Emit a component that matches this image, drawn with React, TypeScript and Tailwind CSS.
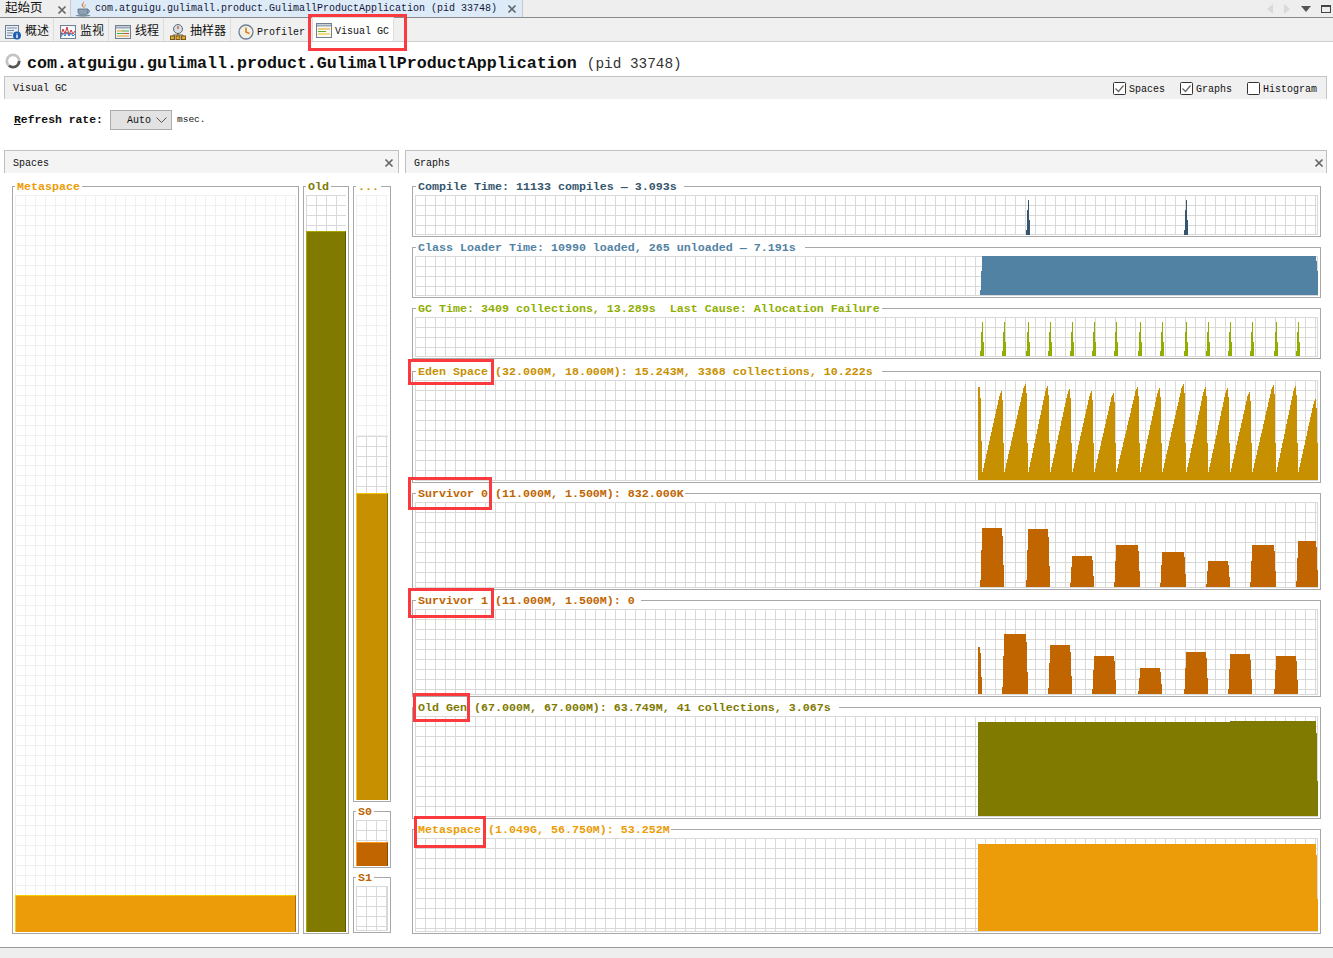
import React from "react";

type Rect = [number, number, number, number];

const lightGrid = "bg-[linear-gradient(#f0f0f0_1px,transparent_1px),linear-gradient(90deg,#f0f0f0_1px,transparent_1px)] bg-[size:10px_10px]";
const darkGrid = "bg-[linear-gradient(#d9d9d9_1px,transparent_1px),linear-gradient(90deg,#d9d9d9_1px,transparent_1px)] bg-[size:10px_10px]";

const toPath = (rects: Rect[]) =>
  rects.map(([x1, y, x2, bottom]) => `M${x1} ${y}H${x2}V${bottom}H${x1}Z`).join("");

// thin peaks of the compile and gc charts
const spike = (x: number, top: number, bottom: number): Rect[] => [
  [x, bottom - 5, x + 4, bottom],
  [x + 1, top + 20, x + 4, bottom],
  [x + 1, top + 10, x + 3, bottom],
  [x + 2, top, x + 3, bottom],
];

const edenPeaks = [
  [1001, 391], [1025, 384], [1047, 386], [1069, 389], [1091, 391],
  [1113, 393], [1137, 387], [1159, 388], [1183, 384], [1205, 387],
  [1227, 388], [1249, 392], [1273, 385], [1295, 386], [1315, 399],
];

const edenRects = () => {
  const rects: Rect[] = [
    [978, 387, 980, 480],
    [980, 398, 981, 480],
    [981, 441, 982, 480],
  ];
  let start = 982;
  edenPeaks.forEach(([peak, top]) => {
    for (let x = start; x < peak - 1; x += 1) {
      const t = (x - start) / (peak - 1 - start);
      rects.push([x, Math.round(472 - (472 - top) * t), x + 1, 480]);
    }
    rects.push([peak - 1, top + 2, peak, 480]);
    rects.push([peak, top, peak + 1, 480]);
    rects.push([peak + 1, top + 9, peak + 2, 480]);
    rects.push([peak + 2, 443, peak + 3, 480]);
    start = peak + 3;
  });
  return rects;
};

// stepped block of the survivor charts
const block = (left: number, right: number, top: number, bottom: number): Rect[] => {
  const h = bottom - top;
  return [
    [left, bottom - h * 0.12, right, bottom],
    [left + 1, bottom - h * 0.37, right, bottom],
    [left + 1, bottom - h * 0.63, right - 1, bottom],
    [left + 2, bottom - h * 0.86, right - 1, bottom],
    [left + 2, top, right - 2, bottom],
  ];
};

const charts = [
  {
    title: "Compile Time: 11133 compiles — 3.093s",
    color: "text-[#35566e]",
    fill: "#35566e",
    y: 186,
    h: 51,
    box: "h-[51px]",
    pad: "pr-[7px]",
    rects: [...spike(1026, 200, 235), ...spike(1184, 200, 235)],
  },
  {
    title: "Class Loader Time: 10990 loaded, 265 unloaded — 7.191s",
    color: "text-[#5282a3]",
    fill: "#5282a3",
    y: 247,
    h: 51,
    box: "h-[51px]",
    pad: "pr-[9px]",
    rects: [
      [980, 290, 1318, 295],
      [981, 271, 1318, 295],
      [982, 256, 1316, 295],
      [1316, 261, 1317, 295],
      [1317, 281, 1318, 295],
    ] as Rect[],
  },
  {
    title: "GC Time: 3409 collections, 13.289s  Last Cause: Allocation Failure",
    color: "text-[#8fae00]",
    fill: "#8fae00",
    y: 308,
    h: 51,
    box: "h-[51px]",
    pad: "pr-[2px]",
    rects: [980, 1002, 1026, 1048, 1070, 1092, 1114, 1138, 1160, 1184, 1206, 1228, 1250, 1274, 1296].flatMap(x =>
      spike(x, 322, 356),
    ),
  },
  {
    title: "Eden Space (32.000M, 18.000M): 15.243M, 3368 collections, 10.222s",
    color: "text-[#c79000]",
    fill: "#c79000",
    y: 371,
    h: 112,
    box: "h-[112px] mt-[2px]",
    pad: "pr-[9px]",
    rects: edenRects(),
  },
  {
    title: "Survivor 0 (11.000M, 1.500M): 832.000K",
    color: "text-[#c06500]",
    fill: "#c06500",
    y: 493,
    h: 97,
    box: "h-[97px]",
    pad: "pr-[1px]",
    rects: [
      block(980, 1004, 528, 587),
      block(1026, 1050, 529, 587),
      block(1070, 1094, 556, 587),
      block(1114, 1140, 545, 587),
      block(1160, 1186, 552, 587),
      block(1206, 1230, 561, 587),
      block(1250, 1276, 545, 587),
      block(1296, 1318, 541, 587),
    ].flat(),
  },
  {
    title: "Survivor 1 (11.000M, 1.500M): 0",
    color: "text-[#c06500]",
    fill: "#c06500",
    y: 600,
    h: 97,
    box: "h-[97px]",
    pad: "pr-[6px]",
    rects: [
      [978, 647, 980, 694],
      [980, 653, 981, 694],
      [981, 677, 982, 694],
      ...block(1002, 1028, 634, 694),
      ...block(1048, 1072, 645, 694),
      ...block(1092, 1116, 656, 694),
      ...block(1138, 1162, 668, 694),
      ...block(1184, 1208, 652, 694),
      ...block(1228, 1252, 654, 694),
      ...block(1274, 1298, 656, 694),
    ] as Rect[],
  },
  {
    title: "Old Gen (67.000M, 67.000M): 63.749M, 41 collections, 3.067s",
    color: "text-[#807a00]",
    fill: "#807a00",
    y: 707,
    h: 112,
    box: "h-[112px]",
    pad: "pr-[8px]",
    rects: [
      [978, 722, 1316, 816],
      [1230, 721, 1316, 816],
      [1316, 733, 1317, 816],
      [1317, 781, 1318, 816],
    ] as Rect[],
  },
  {
    title: "Metaspace (1.049G, 56.750M): 53.252M",
    color: "text-[#ec9c06]",
    fill: "#ec9c08",
    y: 829,
    h: 105,
    box: "h-[105px]",
    pad: "pr-[1px]",
    rects: [
      [978, 844, 1316, 931],
      [1316, 855, 1317, 931],
      [1317, 899, 1318, 931],
    ] as Rect[],
  },
];

const Chart: React.FC<(typeof charts)[number]> = ({title, color, fill, y, h, box, pad, rects}) => (
  <div className={`relative flex flex-col border border-[#a8a8a8] pt-[8px] pb-[1px] px-[2px] ${box}`}>
    <div className={`absolute left-[3px] top-[-8px] bg-white pl-[2px] h-[15px] leading-[17px] text-[11.67px] font-bold whitespace-pre ${color} ${pad}`}>
      {title}
    </div>
    <div className={`flex-1 min-h-0 border-r border-b border-[#d9d9d9] ${darkGrid}`}>
      <svg width={903} height={h - 11} viewBox={`415 ${y + 9} 903 ${h - 11}`} className="block" shapeRendering="crispEdges">
        <path d={toPath(rects as Rect[])} fill={fill} />
      </svg>
    </div>
  </div>
);

const SpaceBox: React.FC<{title: string; color: string; className: string; children: React.ReactNode}> = ({title, color, className, children}) => (
  <div className={`relative flex flex-col border border-[#a8a8a8] pt-[8px] pb-[1px] px-[2px] ${className}`}>
    <div className={`absolute left-[2px] top-[-8px] bg-white px-[2px] h-[15px] leading-[17px] text-[11.67px] font-bold whitespace-pre ${color}`}>
      {title}
    </div>
    <div className="flex-1 min-h-0 flex flex-col">{children}</div>
  </div>
);

const Close = () => (
  <svg width="10" height="10" viewBox="0 0 10 10">
    <path d="M1.5 1.5l7 7M8.5 1.5l-7 7" stroke="#666" strokeWidth="1.7" />
  </svg>
);

const InfoIcon = () => (
  <svg width="16" height="16" viewBox="0 0 16 16" className="shrink-0">
    <rect x="0.5" y="1.5" width="13" height="13" fill="#e8eef6" stroke="#6f7f90" />
    <path d="M2 4h10M2 6.5h7M2 9h6M2 11.5h5" stroke="#7a8ca0" />
    <circle cx="12" cy="11.5" r="4" fill="#1d5fae" />
    <path d="M12 9.5v1M12 11v3" stroke="#fff" strokeWidth="1.4" />
  </svg>
);

const MonitorIcon = () => (
  <svg width="16" height="16" viewBox="0 0 16 16" className="shrink-0">
    <rect x="0.5" y="1.5" width="15" height="13" fill="#f4f7fb" stroke="#6f7f90" />
    <path d="M1 11l2-6 2 5 2-7 2 8 2-5 2 4 2-3" fill="none" stroke="#d0342c" />
    <path d="M1 13l2-4 2 3 2-4 2 4 2-3 2 3 2-2" fill="none" stroke="#2b78c9" />
  </svg>
);

const ThreadIcon = () => (
  <svg width="16" height="16" viewBox="0 0 16 16" className="shrink-0">
    <rect x="0.5" y="1.5" width="15" height="13" fill="#eef1f4" stroke="#6f7f90" />
    <path d="M1 3.5h14" stroke="#9aa8b8" strokeWidth="2" />
    <path d="M2 7h5" stroke="#e7a11a" />
    <path d="M7 7h7" stroke="#57a83a" />
    <path d="M2 9.5h7" stroke="#57a83a" />
    <path d="M9 9.5h5" stroke="#d5493a" />
    <path d="M2 12h12" stroke="#e7a11a" />
  </svg>
);

const SamplerIcon = () => (
  <svg width="16" height="16" viewBox="0 0 16 16" className="shrink-0">
    <circle cx="8" cy="5" r="4.5" fill="#d7dde4" stroke="#5f6b78" />
    <path d="M8 5V2" stroke="#c2571a" strokeWidth="1.2" />
    <path d="M8 9v2M3 13v-2h10v2" fill="none" stroke="#6b5a2a" />
    <rect x="0.5" y="12" width="4" height="3.5" fill="#e2a93b" stroke="#7a5a17" />
    <rect x="6" y="12" width="4" height="3.5" fill="#e2a93b" stroke="#7a5a17" />
    <rect x="11.5" y="12" width="4" height="3.5" fill="#e2a93b" stroke="#7a5a17" />
  </svg>
);

const ClockIcon = () => (
  <svg width="16" height="16" viewBox="0 0 16 16" className="shrink-0">
    <circle cx="8" cy="8" r="7" fill="#f3efe2" stroke="#6a7f96" strokeWidth="1.3" />
    <path d="M8 3.5V8l3.5 1.5" fill="none" stroke="#dd7a22" strokeWidth="1.6" />
  </svg>
);

const GcIcon = () => (
  <svg width="16" height="16" viewBox="0 0 16 16" className="shrink-0">
    <rect x="0.5" y="0.5" width="15" height="14" fill="#f8f8ee" stroke="#6f7f90" />
    <path d="M1 2.5h14" stroke="#9aa8b8" strokeWidth="2" />
    <path d="M2 6h12" stroke="#e7a11a" />
    <path d="M2 8.5h8" stroke="#57a83a" />
    <path d="M2 11h12" stroke="#e7c21a" />
  </svg>
);

const CoffeeIcon = () => (
  <svg width="17" height="16" viewBox="0 0 17 16" className="shrink-0">
    <path d="M9 0c1 2-2 3-1 5 .5 1 1 1 1 2-2-1-3-3-2-4s2-2 2-3z" fill="#d9702a" />
    <path d="M11 3c0 2-2 2-1 4-1 0-1-2 0-3z" fill="#d9702a" />
    <path d="M3 8h10v3c0 2-2 3-5 3s-5-1-5-3z" fill="#8da0b3" stroke="#566a7e" strokeWidth=".8" />
    <path d="M13 9c2 0 2 3-.5 3" fill="none" stroke="#566a7e" />
    <ellipse cx="8" cy="14.5" rx="7.5" ry="1.2" fill="#7c90a4" />
  </svg>
);

const Spinner = () => (
  <svg width="16" height="16" viewBox="0 0 16 16" className="-mt-[6px]">
    <circle cx="8" cy="8" r="6.2" fill="none" stroke="#555" strokeWidth="2.8" strokeDasharray="14 25" />
    <circle cx="8" cy="8" r="6.2" fill="none" stroke="#c4c4c4" strokeWidth="2.8" strokeDasharray="25 14" strokeDashoffset="-14" />
  </svg>
);

const Check: React.FC<{label: string; checked?: boolean; className: string}> = ({label, checked, className}) => (
  <div className={`flex items-center gap-[3px] pt-[2px] text-[10px] text-[#111] ${className}`}>
    <svg width="13" height="13" viewBox="0 0 13 13" className="-mt-[1px]">
      <rect x="0.5" y="0.5" width="12" height="12" rx="1" fill="#fff" stroke="#333" />
      {checked && <path d="M2.5 6.5l3 3 5-6" fill="none" stroke="#666" strokeWidth="1.2" />}
    </svg>
    {label}
  </div>
);

const SubTab: React.FC<{icon: React.ReactNode; label: string; className: string}> = ({icon, label, className}) => (
  <div className={`flex items-center h-full border-r border-[#dddddd] gap-[4px] pr-[4px] pt-[5px] text-[12px] text-[#111] ${className}`}>
    {icon}
    {label}
  </div>
);

const App = () => (
  <div className="relative w-[1333px] h-[958px] overflow-hidden flex flex-col bg-white text-[#111] font-['Liberation_Mono','Noto_Sans_CJK_SC',monospace]">
    {/* document tabs */}
    <div className="h-[18px] shrink-0 flex bg-[#eeeeee] border-b border-[#8a8a8a] overflow-hidden">
      <div className="w-[71px] flex items-center pl-[5px] pr-[3px] pt-[2px] justify-between text-[12.5px] border-r border-[#c8c8c8]">
        起始页
        <Close />
      </div>
      <div className="w-[452px] flex items-center bg-[#dcebf7] pl-[4px] pr-[5px] gap-[3px] border-r border-[#c8c8c8] text-[10px] whitespace-pre text-[#16163a]">
        <CoffeeIcon />
        <span className="flex-1">com.atguigu.gulimall.product.GulimallProductApplication (pid 33748)</span>
        <Close />
      </div>
      <div className="flex-1 flex items-center justify-end gap-[9px] pr-[2px]">
        <svg width="8" height="10" viewBox="0 0 8 10"><path d="M7 0v10L1 5z" fill="#d9d9d9" /></svg>
        <svg width="8" height="10" viewBox="0 0 8 10"><path d="M1 0v10l6-5z" fill="#d9d9d9" /></svg>
        <svg width="12" height="8" viewBox="0 0 12 8"><path d="M1 1h10L6 7z" fill="#555" /></svg>
        <div className="w-[10px] h-[8px] border border-[#444] border-t-2" />
      </div>
    </div>

    {/* view tabs */}
    <div className="h-[24px] shrink-0 flex bg-[#f0f0f0] border-b border-[#cfcfcf]">
      <SubTab icon={<InfoIcon />} label="概述" className="pl-[5px]" />
      <SubTab icon={<MonitorIcon />} label="监视" className="pl-[6px]" />
      <SubTab icon={<ThreadIcon />} label="线程" className="pl-[6px]" />
      <SubTab icon={<SamplerIcon />} label="抽样器" className="pl-[6px]" />
      <div className="w-[81px] flex items-center pl-[7px] pt-[5px] gap-[3px] text-[10px] whitespace-pre">
        <ClockIcon />
        Profiler
      </div>
      <div className="w-[82px] -mt-[1px] h-[24px] flex items-center pl-[3px] gap-[3px] bg-white border-x border-t border-[#dddddd] text-[10px] whitespace-pre pt-[3px]">
        <GcIcon />
        Visual GC
      </div>
    </div>

    {/* title */}
    <div className="h-[34px] shrink-0 flex items-center pl-[5px] pt-[9px] whitespace-pre">
      <Spinner />
      <span className="ml-[6px] text-[16.67px] font-bold text-[#111]">com.atguigu.gulimall.product.GulimallProductApplication</span>
      <span className="ml-[10px] text-[14.4px] text-[#333] pt-[2px]">(pid 33748)</span>
    </div>

    {/* visual gc bar */}
    <div className="h-[23px] shrink-0 ml-[4px] mr-[6px] flex items-center justify-between bg-[#f0f0f0] border-x border-t border-[#c4c4c4] pl-[8px]">
      <span className="text-[10px]">Visual GC</span>
      <div className="flex">
        <Check label="Spaces" checked className="w-[67px]" />
        <Check label="Graphs" checked className="w-[67px]" />
        <Check label="Histogram" className="w-[79px]" />
      </div>
    </div>

    {/* refresh rate */}
    <div className="h-[51px] shrink-0 flex items-center pl-[14px] pb-[9px]">
      <span className="w-[96px] text-[11.4px] font-bold whitespace-pre pt-[2px]">
        <span className="underline">R</span>efresh rate:
      </span>
      <div className="w-[62px] h-[20px] flex items-center justify-end pr-[4px] gap-[5px] bg-[#e2e2e2] border border-[#ababab] text-[10px]">
        Auto
        <svg width="11" height="6" viewBox="0 0 11 6"><path d="M.5.5l5 5 5-5" fill="none" stroke="#555" /></svg>
      </div>
      <span className="ml-[5px] text-[9.5px] pt-[1px]">msec.</span>
    </div>

    {/* panes */}
    <div className="flex-1 min-h-0 flex gap-[6px] pl-[4px]">
      <div className="w-[395px] flex flex-col">
        <div className="h-[23px] shrink-0 flex items-center justify-between pl-[8px] pr-[4px] pt-[1px] bg-[#f4f4f4] border-x border-t border-[#c0c0c0] text-[10px]">
          <span className="pt-[1px]">Spaces</span>
          <Close />
        </div>
        <div className="flex-1 min-h-0 flex gap-[4px] pt-[13px] pb-[13px] px-[8px]">
          <SpaceBox title="Metaspace" color="text-[#ec9c06]" className="w-[287px]">
            <div className={`flex-1 ${lightGrid}`} />
            <div className="h-[37px] bg-[#ec9c08] border-t border-l border-[#f5d000] border-r-[#a87008] border-r" />
          </SpaceBox>
          <SpaceBox title="Old" color="text-[#807a00]" className="w-[46px]">
            <div className={`h-[36px] ${darkGrid}`} />
            <div className="flex-1 bg-[#807a00] border-t border-l border-[#aaa400] border-r-[#5a5600] border-r" />
          </SpaceBox>
          <div className="w-[38px] flex flex-col">
            <SpaceBox title="..." color="text-[#c79000]" className="h-[616px]">
              <div className={`flex-1 ${lightGrid}`} />
              <div className={`h-[57px] ${darkGrid}`} />
              <div className="h-[307px] bg-[#c79000] border-t border-l border-[#f5c400] border-r-[#8a6a00] border-r" />
            </SpaceBox>
            <SpaceBox title="S0" color="text-[#c06500]" className="h-[57px] mt-[9px]">
              <div className={`flex-1 ${darkGrid}`} />
              <div className="h-[24px] bg-[#c06500] border-t border-l border-[#ff9a1a] border-r-[#8a4a00] border-r" />
            </SpaceBox>
            <SpaceBox title="S1" color="text-[#c06500]" className="h-[56px] mt-[9px]">
              <div className={`flex-1 border-r border-b border-[#d9d9d9] ${darkGrid}`} />
            </SpaceBox>
          </div>
        </div>
      </div>

      <div className="w-[922px] flex flex-col">
        <div className="h-[23px] shrink-0 flex items-center justify-between pl-[8px] pr-[2px] pt-[1px] bg-[#f4f4f4] border-x border-t border-[#c0c0c0] text-[10px]">
          <span className="pt-[1px]">Graphs</span>
          <Close />
        </div>
        <div className="pl-[7px] pt-[13px] w-[916px] flex flex-col gap-[10px]">
          {charts.map(chart => (
            <Chart key={chart.y} {...chart} />
          ))}
        </div>
      </div>
    </div>

    <div className="h-[11px] shrink-0 bg-[#eeeeee] border-t border-[#999999]" />

    {/* red highlight boxes from the annotated screenshot */}
    <div className="absolute left-[308px] top-[14px] w-[99px] h-[37px] border-[3px] border-[#fb3a3f]" />
    <div className="absolute left-[408px] top-[359px] w-[86px] h-[26px] border-[3px] border-[#fb3a3f]" />
    <div className="absolute left-[408px] top-[477px] w-[84px] h-[33px] border-[3px] border-[#fb3a3f]" />
    <div className="absolute left-[408px] top-[588px] w-[86px] h-[30px] border-[3px] border-[#fb3a3f]" />
    <div className="absolute left-[413px] top-[693px] w-[57px] h-[29px] border-[3px] border-[#fb3a3f]" />
    <div className="absolute left-[414px] top-[816px] w-[72px] h-[32px] border-[3px] border-[#fb3a3f]" />
  </div>
);

export default App;
